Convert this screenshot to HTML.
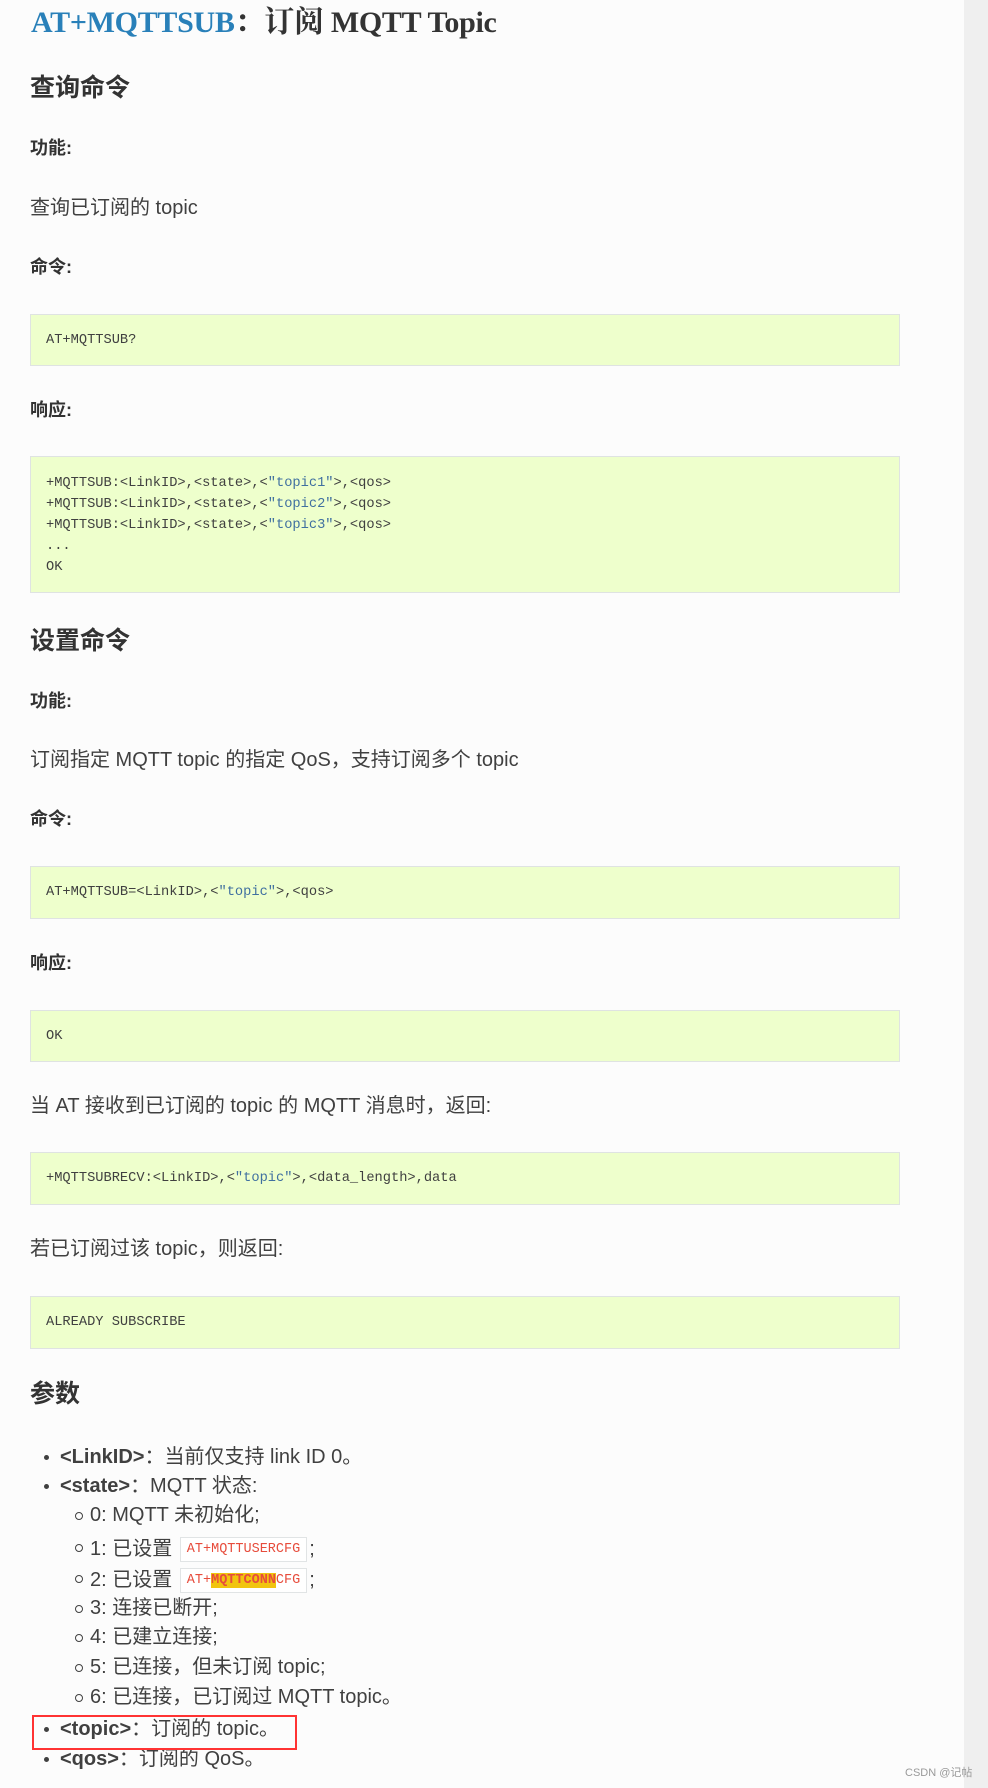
<!DOCTYPE html>
<html><head><meta charset="utf-8">
<style>
*{margin:0;padding:0;box-sizing:border-box}
html,body{width:988px;height:1788px;overflow:hidden;background:#fcfcfc}
body{position:relative;font-family:"Liberation Sans","Noto Sans CJK SC",sans-serif;color:#404040}
.side{position:absolute;left:964px;top:0;width:24px;height:1788px;background:#efefef}
.a{position:absolute;white-space:nowrap;line-height:1}
.t{left:31px;font-family:"Liberation Serif","Noto Serif CJK SC",serif;font-weight:bold;font-size:30px;color:#333;top:8px;letter-spacing:-0.3px}
.t b{color:#2980b9}
.h2{left:30px;font-weight:bold;font-size:25px;color:#333}
.h4{left:30px;font-weight:bold;font-size:18px;color:#333}
.p{left:30px;font-size:20px}
.code{position:absolute;left:30px;width:870px;background:#eeffcc;border:1px solid #dfe3e2;font-family:"Liberation Mono","Noto Sans CJK SC",monospace;font-size:13.7px;color:#404040;padding-left:15px}
.code div{height:21px;line-height:21px;white-space:pre}
.s{color:#4070a0}
.li{position:absolute;left:60px;font-size:20px;white-space:nowrap;line-height:1}
.li::before{content:"";position:absolute;left:-16px;top:8px;width:5px;height:5px;border-radius:50%;background:#404040}
.sub{left:90px}
.sub::before{left:-15px;top:7px;width:6px;height:6px;background:none;border:1.2px solid #404040}
.ic{display:inline-block;font-family:"Liberation Mono",monospace;font-size:13.5px;color:#e74c3c;background:#fff;border:1px solid #e1e4e5;padding:4px 6px;line-height:15px;vertical-align:middle;margin:0 2px}
.hl{background:#f1c40f;font-weight:bold}
</style></head><body>
<div class="side"></div>
<div class="a t"><b>AT+MQTTSUB</b>：订阅 MQTT Topic</div>
<div class="a h2" style="top:76px">查询命令</div>
<div class="a h4" style="top:139px">功能:</div>
<div class="a p" style="top:198px">查询已订阅的 topic</div>
<div class="a h4" style="top:258px">命令:</div>
<div class="code" style="top:314px;height:52px;padding-top:15px"><div>AT+MQTTSUB?</div></div>
<div class="a h4" style="top:401px">响应:</div>
<div class="code" style="top:456px;height:137px;padding-top:16px">
<div>+MQTTSUB:&lt;LinkID&gt;,&lt;state&gt;,&lt;<span class="s">"topic1"</span>&gt;,&lt;qos&gt;</div><div>+MQTTSUB:&lt;LinkID&gt;,&lt;state&gt;,&lt;<span class="s">"topic2"</span>&gt;,&lt;qos&gt;</div><div>+MQTTSUB:&lt;LinkID&gt;,&lt;state&gt;,&lt;<span class="s">"topic3"</span>&gt;,&lt;qos&gt;</div><div>...</div><div>OK</div></div>
<div class="a h2" style="top:629px">设置命令</div>
<div class="a h4" style="top:692px">功能:</div>
<div class="a p" style="top:750px">订阅指定 MQTT topic 的指定 QoS，支持订阅多个 topic</div>
<div class="a h4" style="top:810px">命令:</div>
<div class="code" style="top:866px;height:53px;padding-top:15px"><div>AT+MQTTSUB=&lt;LinkID&gt;,&lt;<span class="s">"topic"</span>&gt;,&lt;qos&gt;</div></div>
<div class="a h4" style="top:954px">响应:</div>
<div class="code" style="top:1010px;height:52px;padding-top:15px"><div>OK</div></div>
<div class="a p" style="top:1096px">当 AT 接收到已订阅的 topic 的 MQTT 消息时，返回:</div>
<div class="code" style="top:1152px;height:53px;padding-top:15px"><div>+MQTTSUBRECV:&lt;LinkID&gt;,&lt;<span class="s">"topic"</span>&gt;,&lt;data_length&gt;,data</div></div>
<div class="a p" style="top:1239px">若已订阅过该 topic，则返回:</div>
<div class="code" style="top:1296px;height:53px;padding-top:15px"><div>ALREADY SUBSCRIBE</div></div>
<div class="a h2" style="top:1382px">参数</div>
<div class="li" style="top:1447px"><b>&lt;LinkID&gt;</b>：当前仅支持 link ID 0。</div>
<div class="li" style="top:1476px"><b>&lt;state&gt;</b>：MQTT 状态:</div>
<div class="li sub" style="top:1505px">0: MQTT 未初始化;</div>
<div class="li sub" style="top:1537px">1: 已设置 <span class="ic">AT+MQTTUSERCFG</span>;</div>
<div class="li sub" style="top:1568px">2: 已设置 <span class="ic">AT+<span class="hl">MQTTCONN</span>CFG</span>;</div>
<div class="li sub" style="top:1598px">3: 连接已断开;</div>
<div class="li sub" style="top:1627px">4: 已建立连接;</div>
<div class="li sub" style="top:1657px">5: 已连接，但未订阅 topic;</div>
<div class="li sub" style="top:1687px">6: 已连接，已订阅过 MQTT topic。</div>
<div class="li" style="top:1719px"><b>&lt;topic&gt;</b>：订阅的 topic。</div>
<div class="li" style="top:1749px"><b>&lt;qos&gt;</b>：订阅的 QoS。</div>
<div style="position:absolute;left:32px;top:1715px;width:265px;height:35px;border:2px solid #f33"></div>
<div class="a" style="left:905px;top:1768px;font-size:11px;color:#999">CSDN @记帖</div>
</body></html>
